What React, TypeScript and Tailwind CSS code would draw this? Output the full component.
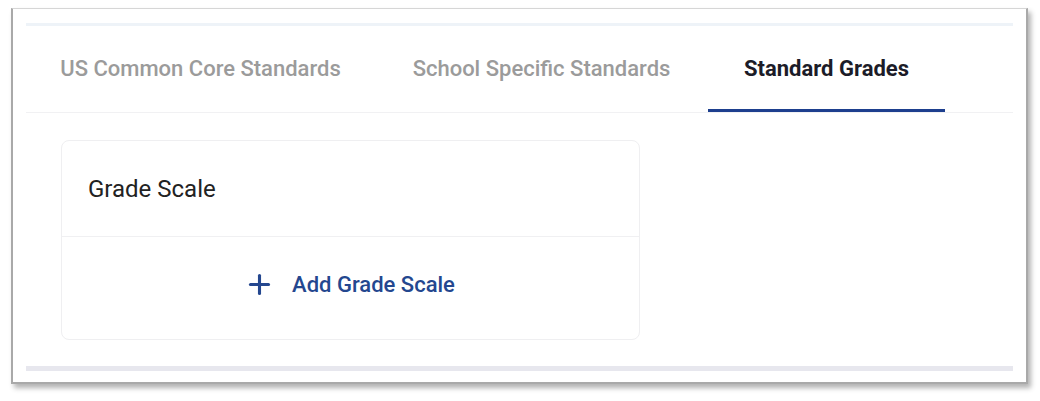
import { Plus } from "lucide-react";

type Tab = {
  label: string;
  width: string;
  active?: boolean;
};

const tabs: Tab[] = [
  { label: "US Common Core Standards", width: "w-[349px]" },
  { label: "School Specific Standards", width: "w-[333px]" },
  { label: "Standard Grades", width: "w-[237px]", active: true },
];

function TabItem({ label, width, active }: Tab) {
  return (
    <div
      className={`relative flex h-full items-center justify-center pb-[2px] ${width}`}
    >
      <span
        className={
          active
            ? "text-[22px] font-bold text-[#1c1c28]"
            : "text-[22px] font-medium text-[#9b9b9b]"
        }
      >
        {label}
      </span>
      {active && (
        <div className="absolute bottom-0 left-0 right-0 h-[3px] bg-[#1d3f8e]" />
      )}
    </div>
  );
}

function GradeScaleCard() {
  return (
    <div className="ml-[35px] mt-[27px] w-[579px] rounded-lg border border-[#efeff1] bg-white">
      <div className="flex h-[96px] items-center border-b border-[#f0f0f2] pl-[26px]">
        <span className="text-[24px] text-[#222]">Grade Scale</span>
      </div>
      <div className="flex h-[102px] items-center justify-center pb-[8px] pl-[2px] pr-[4px]">
        <button className="flex items-center gap-[17px] text-[#24478f]">
          <Plus size={31} strokeWidth={2.4} />
          <span className="text-[22px] font-medium">Add Grade Scale</span>
        </button>
      </div>
    </div>
  );
}

export default function App() {
  return (
    <div
      className="h-[401px] w-[1040px] bg-white pl-[11px] pt-[8px]"
      style={{ fontFamily: "Roboto, 'Liberation Sans', sans-serif" }}
    >
      <div className="flex h-[376px] w-[1017px] flex-col border-2 border-[#a9a9a9] border-t-[#d6d6d6] border-t-1 bg-white px-[13px] pt-[14px] shadow-[3px_4px_5px_rgba(0,0,0,0.3)]">
        <div className="h-[3px] bg-[#eef3f8]" />
        <div className="flex h-[87px] border-b border-[#f1f1f3]">
          {tabs.map((tab) => (
            <TabItem key={tab.label} {...tab} />
          ))}
        </div>
        <GradeScaleCard />
        <div className="mt-[26px] h-[5px] bg-[#e7e7ee]" />
      </div>
    </div>
  );
}
